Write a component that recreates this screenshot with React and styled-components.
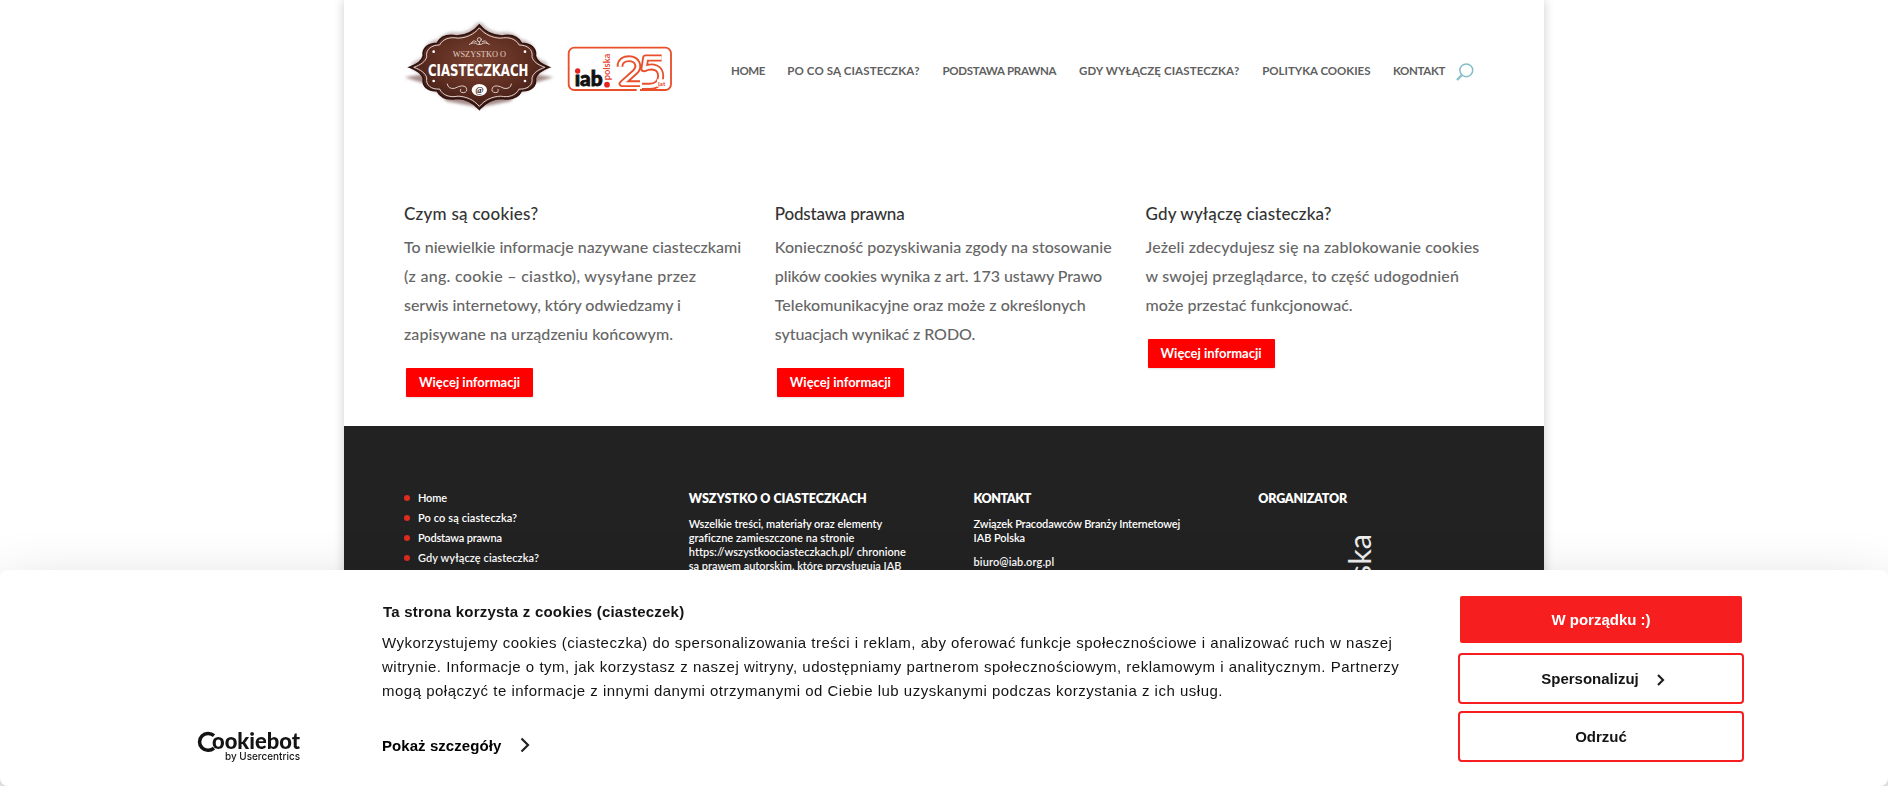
import React from 'react';
import styled, { createGlobalStyle } from 'styled-components';

const GlobalStyle = createGlobalStyle`
  *, *::before, *::after { box-sizing: border-box; }
  body {
    margin: 0;
    background: #fff;
    overflow: hidden;
    font-family: Lato, 'Open Sans', sans-serif;
    font-weight: 500;
    color: #666;
  }
  p, h2, h3, ul { margin: 0; padding: 0; }
  a { color: inherit; text-decoration: none; }
`;

const Page = styled.div`
  width: 1200px;
  height: 786px;
  margin: 0 auto;
  overflow: hidden;
  background: #fff;
  display: flex;
  flex-direction: column;
`;

const Frame = styled.div`
  width: 1200px;
  margin: 0 auto;
  box-shadow: 0 0 10px rgba(0, 0, 0, 0.2);
`;

const Header = styled.header`
  display: flex;
  align-items: flex-start;
  height: 205px;
  flex: none;
  padding: 15px 0 0 56px;
`;

const BadgeSvg = styled.svg`
  display: block;
  width: 155px;
  height: 100px;
  margin-top: -1px;
  flex: none;
`;

const IabSvg = styled.svg`
  display: block;
  width: 120px;
  height: 56px;
  margin: 25px 0 0 5px;
  flex: none;
`;

const Nav = styled.nav`
  display: flex;
  gap: 22.2px;
  margin: 48px 0 0 51px;
`;

const Line = styled.span`
  display: block;
  white-space: nowrap;
  letter-spacing: ${(p) => p.$ls || 0}px;
`;

const NavLink = styled.a`
  width: ${(p) => p.$w}px;
  font-size: 11.5px;
  line-height: 16px;
  font-weight: 700;
  color: #5f5f5f;
`;

const SearchSvg = styled.svg`
  display: block;
  width: 18px;
  height: 18px;
  margin: 48px 0 0 11px;
`;

const Intro = styled.main`
  height: 221px;
  flex: none;
  padding: 0 60px;
  display: grid;
  grid-template-columns: repeat(3, 338.4px);
  column-gap: 32.4px;
`;

const IntroTitle = styled.h2`
  font-size: 17px;
  line-height: 18px;
  font-weight: 500;
  color: #333;
  padding-bottom: 10px;
  box-sizing: content-box;
`;

const IntroText = styled.p`
  font-size: 16px;
  line-height: 28.95px;
`;

const MoreButton = styled.a`
  display: flex;
  justify-content: center;
  align-items: center;
  width: 127px;
  height: 29px;
  margin: 19.2px 0 0 2px;
  padding-bottom: 2px;
  border-radius: 1px;
  background: #f00;
  box-shadow: 0 1px 2px rgba(0, 0, 0, 0.12);
  color: #fff;
  font-size: 13px;
  font-weight: 700;
`;

const Footer = styled.footer`
  flex: 1;
  background: #222;
  color: #fff;
  padding: 63px 60px 0;
  display: grid;
  grid-template-columns: repeat(4, 225.4px);
  column-gap: 59.4px;
  font-size: 11px;
  font-weight: 600;
`;

const FooterMenu = styled.ul`
  list-style: none;
  margin-top: -1.5px;
`;

const FooterItem = styled.li`
  display: flex;
  align-items: center;
  gap: 8px;
  height: 20px;

  &::before {
    content: '';
    width: 6px;
    height: 6px;
    border-radius: 50%;
    background: #e02b20;
  }
`;

const FooterTitle = styled.h3`
  font-size: 12.5px;
  line-height: 16px;
  font-weight: 800;
  padding-bottom: 9.6px;
  padding-top: 2px;
`;

const FooterText = styled.p`
  line-height: 14.2px;
  margin-bottom: 10.4px;
`;

const OrganizerSvg = styled.svg`
  display: block;
  width: 40px;
  height: 110px;
  margin: 15px 0 0 86px;
`;

const Banner = styled.section`
  position: fixed;
  left: 0;
  right: 0;
  bottom: 0;
  height: 216px;
  border-radius: 8px;
  background: #fff;
  box-shadow: 0 32px 68px rgba(0, 0, 0, 0.3);
  display: flex;
  font-family: 'Liberation Sans', Arial, sans-serif;
  font-size: 15px;
  font-weight: 400;
  color: #141414;
`;

const BannerBrand = styled.div`
  width: 382px;
  padding: 158px 0 0 194px;
  flex: none;
`;

const CookiebotSvg = styled.svg`
  display: block;
  width: 110px;
  height: 40px;
`;

const BannerBody = styled.div`
  width: 1076px;
  flex: none;
  padding-top: 33px;
`;

const BannerTitle = styled.h2`
  font-size: 15px;
  line-height: 18px;
  font-weight: 700;
  margin-left: 1px;
`;

const BannerText = styled.p`
  line-height: 24px;
  margin-top: 10px;
`;

const Details = styled.a`
  display: flex;
  align-items: center;
  gap: 19px;
  margin-top: 32px;
  height: 20px;
  font-weight: 700;
  letter-spacing: 0.06px;
  color: #000;
`;

const Actions = styled.div`
  width: 286px;
  padding-top: 24px;
`;

const Action = styled.button`
  display: flex;
  align-items: center;
  justify-content: center;
  gap: 18px;
  width: 286px;
  height: 51px;
  margin: 0 0 7px;
  padding: 0 0 1px;
  border: 2px solid #f61e1f;
  border-radius: 4px;
  background: #fff;
  color: #141414;
  font: 700 15px 'Liberation Sans', Arial, sans-serif;
`;

const PrimaryAction = styled(Action)`
  width: 282px;
  height: 47px;
  margin: 2px 2px 10px;
  border: 0;
  border-radius: 2px;
  background: #f61e1f;
  color: #fff;
`;

const ActionChevron = styled.svg`
  width: 8px;
  height: 12px;
  margin: 3px -4px 0 0;
`;

const NAV = [
  ['HOME', 34, -0.41],
  ['PO CO SĄ CIASTECZKA?', 133, 0.15],
  ['PODSTAWA PRAWNA', 114.5, -0.26],
  ['GDY WYŁĄCZĘ CIASTECZKA?', 161, 0.1],
  ['POLITYKA COOKIES', 108.5, -0.03],
  ['KONTAKT', 52, -0.33],
];

const INTRO = [
  {
    title: ['Czym są cookies?', 0.25],
    lines: [
      ['To niewielkie informacje nazywane ciasteczkami', 0],
      ['(z ang. cookie – ciastko), wysyłane przez', 0.28],
      ['serwis internetowy, który odwiedzamy i', -0.05],
      ['zapisywane na urządzeniu końcowym.', 0.06],
    ],
  },
  {
    title: ['Podstawa prawna', -0.2],
    lines: [
      ['Konieczność pozyskiwania zgody na stosowanie', 0.02],
      ['plików cookies wynika z art. 173 ustawy Prawo', -0.07],
      ['Telekomunikacyjne oraz może z określonych', 0.03],
      ['sytuacjach wynikać z RODO.', -0.06],
    ],
  },
  {
    title: ['Gdy wyłączę ciasteczka?', 0.14],
    lines: [
      ['Jeżeli zdecydujesz się na zablokowanie cookies', 0.11],
      ['w swojej przeglądarce, to część udogodnień', 0.17],
      ['może przestać funkcjonować.', 0.02],
    ],
  },
];

const MENU = [
  ['Home', -0.18],
  ['Po co są ciasteczka?', 0.1],
  ['Podstawa prawna', -0.17],
  ['Gdy wyłączę ciasteczka?', 0.09],
];

const BADGE =
  'M238 33 C256 55 280 65 306 66 C332 61 354 68 365 88 C390 88 410 102 406 126 C410 142 425 152 447 160 C425 168 410 178 406 194 C410 218 390 232 365 230 C354 251 332 258 306 253 C280 254 256 264 238 286 C220 264 196 254 170 253 C144 258 122 251 111 230 C86 232 66 218 70 194 C66 178 51 168 29 160 C51 152 66 142 70 126 C66 102 86 88 111 88 C122 68 144 61 170 66 C196 65 220 55 238 33 Z';

function CookiesBadge() {
  return (
    <BadgeSvg viewBox="0 0 465 300">
      <defs>
        <radialGradient id="wood" cx="50%" cy="42%" r="60%">
          <stop offset="0" stopColor="#7b4231" />
          <stop offset="0.6" stopColor="#5c2c20" />
          <stop offset="1" stopColor="#3a1913" />
        </radialGradient>
        <filter id="soft" x="-20%" y="-20%" width="140%" height="140%">
          <feGaussianBlur stdDeviation="5" />
        </filter>
      </defs>
      <g filter="url(#soft)">
        <path d={BADGE} fill="#c9b9b9" stroke="#c9bcbd" strokeWidth="36" strokeLinejoin="round" transform="translate(24 12) scale(.9)" />
        <path d="M14 190 L110 174 L366 174 L460 190 L380 214 L330 262 L238 280 L140 262 L90 214 Z" fill="#a58c8a" />
      </g>
      <path d={BADGE} fill="url(#wood)" stroke="#30120e" strokeWidth="5" />
      <path d={BADGE} fill="none" stroke="#e9dedb" strokeWidth="3" transform="translate(14.3 11.2) scale(.94 .93)" />
      <g fill="none" stroke="#dccdc6" strokeWidth="3" strokeLinecap="round">
        <path d="M208 91 Q222 82 232 91 H244 Q254 82 268 91" />
        <path d="M214 88 Q218 76 229 83 M262 88 Q258 76 247 83" />
        <circle cx="238" cy="77" r="6" />
        <path d="M238 84 V90" />
        <path d="M142 210 Q144 226 164 223 Q188 210 198 220 Q205 234 190 236 Q178 236 182 226" />
        <path d="M334 210 Q332 226 312 223 Q288 210 278 220 Q271 234 286 236 Q298 236 294 226" />
      </g>
      <g fill="#fff">
        <circle cx="101" cy="113" r="4" />
        <circle cx="375" cy="113" r="4" />
        <circle cx="101" cy="201" r="4" />
        <circle cx="375" cy="201" r="4" />
        <ellipse cx="238" cy="228" rx="23" ry="18" />
      </g>
      <text x="238" y="236" textAnchor="middle" fontFamily="Liberation Serif, serif" fontWeight="700" fontSize="27" fill="#3a1913">@</text>
      <text x="158" y="130" textLength="160" lengthAdjust="spacingAndGlyphs" fontFamily="Liberation Serif, serif" fontWeight="400" fontSize="27" fill="#e3d2c8">WSZYSTKO O</text>
      <text x="84" y="186" textLength="301" lengthAdjust="spacingAndGlyphs" fontFamily="DejaVu Sans Condensed, DejaVu Sans, sans-serif" fontWeight="700" fontSize="48" fill="#fff">CIASTECZKACH</text>
    </BadgeSvg>
  );
}

const TWO = 'M180 80 C180 61 194 56 207 56 C232 56 242 80 225 96 L186 131 H240';
const FIVE = 'M305 54 H257 L252 86 C280 74 302 84 302 108 C302 128 290 139 268 139 H246';

function IabLogo() {
  return (
    <IabSvg viewBox="0 0 360 168">
      <rect x="26" y="23" width="307" height="127" rx="17" fill="none" stroke="#e94f2a" strokeWidth="5.5" />
      <path d="M230 150 H240" stroke="#fff" strokeWidth="8" />
      <path d={FIVE} fill="none" stroke="#e94f2a" strokeWidth="21" strokeLinejoin="round" />
      <path d={FIVE} fill="none" stroke="#fff" strokeWidth="10" strokeLinejoin="round" />
      <path d={TWO} fill="none" stroke="#e94f2a" strokeWidth="20" strokeLinejoin="round" />
      <path d={TWO} fill="none" stroke="#fff" strokeWidth="9" strokeLinejoin="round" />
      <text x="44" y="138" textLength="84" lengthAdjust="spacingAndGlyphs" fontFamily="Lato, sans-serif" fontWeight="900" fontSize="62" fill="#111" stroke="#111" strokeWidth="2.5">iab</text>
      <rect x="42" y="80" width="20" height="22" fill="#fff" />
      <circle cx="53" cy="93" r="8" fill="#e6231e" />
      <circle cx="141" cy="134" r="8.5" fill="#e6231e" />
      <text transform="translate(150 121) rotate(-90)" textLength="80" lengthAdjust="spacingAndGlyphs" fontFamily="Lato, sans-serif" fontWeight="600" fontSize="26" fill="#e6432e">polska</text>
      <rect x="291" y="118" width="28" height="22" fill="#fff" />
      <text x="294" y="137" textLength="22" lengthAdjust="spacingAndGlyphs" fontFamily="Lato, sans-serif" fontWeight="700" fontSize="17" fill="#e6432e">lat</text>
    </IabSvg>
  );
}

function Cookiebot() {
  return (
    <CookiebotSvg viewBox="0 0 110 40" fill="#141414" stroke="#141414">
      <path d="M20 7.6 A8.7 8.4 0 1 0 20 20.2" fill="none" strokeWidth="3.5" />
      <text x="18" y="20.6" textLength="88" lengthAdjust="spacingAndGlyphs" fontFamily="Lato, sans-serif" fontWeight="900" fontSize="22.5" stroke="none">ookiebot</text>
      <text x="31" y="32" textLength="75" lengthAdjust="spacingAndGlyphs" fontFamily="Inter, sans-serif" fontWeight="500" fontSize="10.8" stroke="none">by Usercentrics</text>
    </CookiebotSvg>
  );
}

export default function App() {
  return (
    <>
      <GlobalStyle />
      <Frame>
        <Page>
          <Header>
            <CookiesBadge />
            <IabLogo />
            <Nav>
              {NAV.map(([label, w, ls]) => (
                <NavLink key={label} href="#" $w={w}>
                  <Line $ls={ls}>{label}</Line>
                </NavLink>
              ))}
            </Nav>
            <SearchSvg viewBox="0 0 18 18" fill="none" stroke="#85bdc4" strokeWidth="1.5">
              <circle cx="10.3" cy="7.3" r="6.4" />
              <path d="M5.9 12 L1 17" strokeWidth="2.2" />
            </SearchSvg>
          </Header>
          <Intro>
            {INTRO.map(({ title, lines }) => (
              <article key={title[0]}>
                <IntroTitle>
                  <Line $ls={title[1]}>{title[0]}</Line>
                </IntroTitle>
                <IntroText>
                  {lines.map(([text, ls]) => (
                    <Line key={text} $ls={ls}>{text}</Line>
                  ))}
                </IntroText>
                <MoreButton href="#">Więcej informacji</MoreButton>
              </article>
            ))}
          </Intro>
          <Footer>
            <FooterMenu>
              {MENU.map(([text, ls]) => (
                <FooterItem key={text}>
                  <Line $ls={ls}>{text}</Line>
                </FooterItem>
              ))}
            </FooterMenu>
            <div>
              <FooterTitle><Line $ls={-0.02}>WSZYSTKO O CIASTECZKACH</Line></FooterTitle>
              <FooterText>
                <Line $ls={-0.04}>Wszelkie treści, materiały oraz elementy</Line>
                <Line $ls={0.04}>graficzne zamieszczone na stronie</Line>
                <Line $ls={0.03}>https://wszystkoociasteczkach.pl/ chronione</Line>
                <Line $ls={-0.02}>są prawem autorskim, które przysługują IAB</Line>
              </FooterText>
            </div>
            <div>
              <FooterTitle><Line $ls={-0.45}>KONTAKT</Line></FooterTitle>
              <FooterText>
                <Line $ls={-0.13}>Związek Pracodawców Branży Internetowej</Line>
                <Line $ls={-0.06}>IAB Polska</Line>
              </FooterText>
              <FooterText>
                <Line $ls={0.1}>biuro@iab.org.pl</Line>
              </FooterText>
            </div>
            <div>
              <FooterTitle><Line $ls={-0.22}>ORGANIZATOR</Line></FooterTitle>
              <OrganizerSvg viewBox="0 0 40 110">
                <text transform="translate(27 88) rotate(-90)" textLength="86" lengthAdjust="spacingAndGlyphs" fontFamily="Lato, sans-serif" fontWeight="400" fontSize="31" fill="#eee">polska</text>
              </OrganizerSvg>
            </div>
          </Footer>
        </Page>
      </Frame>
      <Banner>
        <BannerBrand>
          <Cookiebot />
        </BannerBrand>
        <BannerBody>
          <BannerTitle><Line $ls={0.22}>Ta strona korzysta z cookies (ciasteczek)</Line></BannerTitle>
          <BannerText>
            <Line $ls={0.5}>Wykorzystujemy cookies (ciasteczka) do spersonalizowania treści i reklam, aby oferować funkcje społecznościowe i analizować ruch w naszej</Line>
            <Line $ls={0.5}>witrynie. Informacje o tym, jak korzystasz z naszej witryny, udostępniamy partnerom społecznościowym, reklamowym i analitycznym. Partnerzy</Line>
            <Line $ls={0.5}>mogą połączyć te informacje z innymi danymi otrzymanymi od Ciebie lub uzyskanymi podczas korzystania z ich usług.</Line>
          </BannerText>
          <Details href="#">
            Pokaż szczegóły
            <svg width="10" height="16" viewBox="0 0 10 16" fill="none" stroke="#222" strokeWidth="2.2">
              <path d="M1.5 1.5 L8 8 L1.5 14.5" />
            </svg>
          </Details>
        </BannerBody>
        <Actions>
          <PrimaryAction>W porządku :)</PrimaryAction>
          <Action>
            Spersonalizuj
            <ActionChevron viewBox="0 0 8 12" fill="none" stroke="#222" strokeWidth="2.2">
              <path d="M1 1 L6 6 L1 11" />
            </ActionChevron>
          </Action>
          <Action>Odrzuć</Action>
        </Actions>
      </Banner>
    </>
  );
}
